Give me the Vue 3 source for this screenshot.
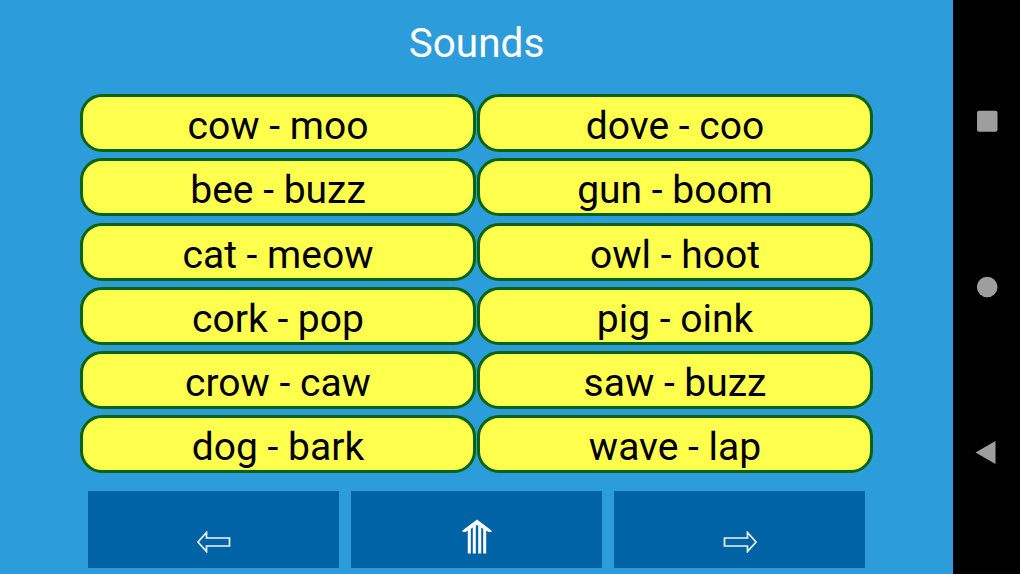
<script setup>
const rows = [
  ['cow - moo', 'dove - coo'],
  ['bee - buzz', 'gun - boom'],
  ['cat - meow', 'owl - hoot'],
  ['cork - pop', 'pig - oink'],
  ['crow - caw', 'saw - buzz'],
  ['dog - bark', 'wave - lap'],
]
const items = rows.flat()
</script>

<template>
  <div class="screen">
    <main class="main">
      <h1 class="title">Sounds</h1>
      <div class="grid">
        <button v-for="item in items" :key="item" class="word">{{ item }}</button>
      </div>
      <div class="actions">
        <div class="action">
          <svg class="arrow" width="36" height="22" viewBox="0 0 36 22">
            <path d="M34.500 7H11.500V1.500L3 11l8.500 9.500V15H34.500z" fill="none" stroke="#f0f4f8" stroke-width="1.700" />
          </svg>
        </div>
        <div class="action">
          <svg class="home" width="32" height="36" viewBox="0 0 32 36">
            <path d="M16 0.500L30.500 11.500V13H27.500L16 6 4.500 13H1.500V11.500z" fill="#fff" />
            <path d="M6.800 8h3v26.500h-3zM11.800 5h3v29.500h-3zM17.200 5h3v29.500h-3zM22.200 8h3v26.500h-3z" fill="#fff" />
          </svg>
        </div>
        <div class="action">
          <svg class="arrow arrow-right" width="36" height="22" viewBox="0 0 36 22">
            <path d="M1.500 7h23V1.500L33 11l-8.500 9.500V15h-23z" fill="none" stroke="#f0f4f8" stroke-width="1.700" />
          </svg>
        </div>
      </div>
    </main>
    <nav class="nav">
      <svg width="24" height="24" viewBox="0 0 24 24"><rect x="2" y="1.700" width="20.500" height="21" rx="2" fill="#9e9e9e" /></svg>
      <svg width="24" height="24" viewBox="0 0 24 24"><circle cx="12.200" cy="12" r="10.300" fill="#9e9e9e" /></svg>
      <svg width="24" height="24" viewBox="0 0 24 24"><path d="M0.500 11.500L20.500 0v23z" fill="#9e9e9e" /></svg>
    </nav>
  </div>
</template>

<style scoped>
.screen {
  display: flex;
  width: 1020px;
  height: 574px;
  overflow: hidden;
  font-family: Roboto, sans-serif;
}
.main {
  width: 953px;
  height: 574px;
  background: #2d9cdb;
  display: flex;
  flex-direction: column;
  align-items: center;
}
.title {
  margin: 0;
  height: 94px;
  padding-top: 20px;
  box-sizing: border-box;
  font-size: 40.5px;
  line-height: 46px;
  font-weight: 400;
  color: #fff;
}
.grid {
  width: 793px;
  display: grid;
  grid-template-columns: 396px 396px;
  column-gap: 1px;
  grid-auto-rows: 58px;
  row-gap: 6.3px;
}
.word {
  box-sizing: border-box;
  margin: 0;
  padding: 6px 0 0;
  background: #ffff4d;
  border: 3px solid #0a640f;
  border-radius: 22px;
  font-family: Roboto, sans-serif;
  font-size: 39px;
  line-height: 46px;
  color: #000;
  text-align: center;
}
.actions {
  margin-top: 18px;
  display: flex;
  gap: 12px;
}
.action {
  width: 251px;
  height: 77px;
  background: #0063a6;
  display: flex;
  justify-content: center;
}
.arrow {
  margin-top: 40px;
  margin-right: 2px;
}
.arrow-right {
  margin-right: 0;
  margin-left: 2px;
}
.home {
  margin-top: 28px;
}
.nav {
  width: 67px;
  height: 574px;
  background: #000;
  display: flex;
  flex-direction: column;
  align-items: center;
  justify-content: center;
  gap: 142px;
}
</style>
